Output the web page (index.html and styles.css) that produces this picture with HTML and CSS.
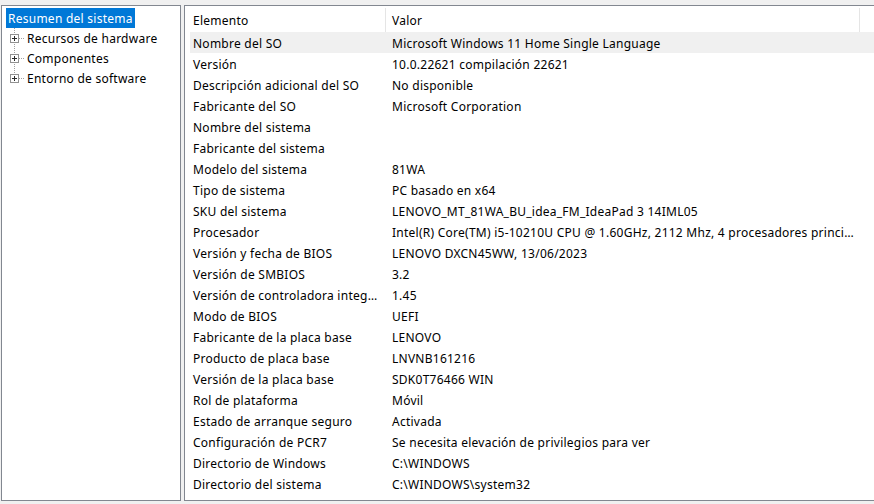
FILE: index.html
```html
<!DOCTYPE html>
<html lang="es">
<head>
<meta charset="utf-8">
<title>Información del sistema</title>
<link rel="stylesheet" href="styles.css">
</head>
<body>
<div class="app">
  <div class="tree-pane">
    <div class="tree">
      <div class="tree-item selected"><span class="label">Resumen del sistema</span></div>
      <div class="tree-item child">
        <svg class="twisty" width="20" height="20" viewBox="0 0 20 20"><path d="M8.5 0V20M13 10.5H19" stroke="#a0a0a0" stroke-dasharray="1 1" fill="none"/><rect x="4.5" y="6.5" width="8" height="8" fill="#fff" stroke="#919191"/><path d="M6 10.5H11M8.5 8V13" stroke="#2b2b2b" fill="none"/></svg>
        <span class="label">Recursos de hardware</span>
      </div>
      <div class="tree-item child">
        <svg class="twisty" width="20" height="20" viewBox="0 0 20 20"><path d="M8.5 0V20M13 10.5H19" stroke="#a0a0a0" stroke-dasharray="1 1" fill="none"/><rect x="4.5" y="6.5" width="8" height="8" fill="#fff" stroke="#919191"/><path d="M6 10.5H11M8.5 8V13" stroke="#2b2b2b" fill="none"/></svg>
        <span class="label">Componentes</span>
      </div>
      <div class="tree-item child">
        <svg class="twisty" width="20" height="20" viewBox="0 0 20 20"><path d="M8.5 0V6M13 10.5H19" stroke="#a0a0a0" stroke-dasharray="1 1" fill="none"/><rect x="4.5" y="6.5" width="8" height="8" fill="#fff" stroke="#919191"/><path d="M6 10.5H11M8.5 8V13" stroke="#2b2b2b" fill="none"/></svg>
        <span class="label">Entorno de software</span>
      </div>
    </div>
  </div>
  <div class="list-pane">
    <div class="list">
      <div class="row header">
        <div class="cell col1">Elemento</div>
        <div class="cell col2">Valor</div>
      </div>
      <div class="row hover"><div class="cell col1">Nombre del SO</div><div class="cell col2">Microsoft Windows 11 Home Single Language</div></div>
      <div class="row"><div class="cell col1">Versión</div><div class="cell col2">10.0.22621 compilación 22621</div></div>
      <div class="row"><div class="cell col1">Descripción adicional del SO</div><div class="cell col2">No disponible</div></div>
      <div class="row"><div class="cell col1">Fabricante del SO</div><div class="cell col2">Microsoft Corporation</div></div>
      <div class="row"><div class="cell col1">Nombre del sistema</div><div class="cell col2"></div></div>
      <div class="row"><div class="cell col1">Fabricante del sistema</div><div class="cell col2"></div></div>
      <div class="row"><div class="cell col1">Modelo del sistema</div><div class="cell col2">81WA</div></div>
      <div class="row"><div class="cell col1">Tipo de sistema</div><div class="cell col2">PC basado en x64</div></div>
      <div class="row"><div class="cell col1">SKU del sistema</div><div class="cell col2">LENOVO_MT_81WA_BU_idea_FM_IdeaPad 3 14IML05</div></div>
      <div class="row"><div class="cell col1">Procesador</div><div class="cell col2">Intel(R) Core(TM) i5-10210U CPU @ 1.60GHz, 2112 Mhz, 4 procesadores principales, 8 procesadores lógicos</div></div>
      <div class="row"><div class="cell col1">Versión y fecha de BIOS</div><div class="cell col2">LENOVO DXCN45WW, 13/06/2023</div></div>
      <div class="row"><div class="cell col1">Versión de SMBIOS</div><div class="cell col2">3.2</div></div>
      <div class="row"><div class="cell col1">Versión de controladora integrada</div><div class="cell col2">1.45</div></div>
      <div class="row"><div class="cell col1">Modo de BIOS</div><div class="cell col2">UEFI</div></div>
      <div class="row"><div class="cell col1">Fabricante de la placa base</div><div class="cell col2">LENOVO</div></div>
      <div class="row"><div class="cell col1">Producto de placa base</div><div class="cell col2">LNVNB161216</div></div>
      <div class="row"><div class="cell col1">Versión de la placa base</div><div class="cell col2">SDK0T76466 WIN</div></div>
      <div class="row"><div class="cell col1">Rol de plataforma</div><div class="cell col2">Móvil</div></div>
      <div class="row"><div class="cell col1">Estado de arranque seguro</div><div class="cell col2">Activada</div></div>
      <div class="row"><div class="cell col1">Configuración de PCR7</div><div class="cell col2">Se necesita elevación de privilegios para ver</div></div>
      <div class="row"><div class="cell col1">Directorio de Windows</div><div class="cell col2">C:\WINDOWS</div></div>
      <div class="row"><div class="cell col1">Directorio del sistema</div><div class="cell col2">C:\WINDOWS\system32</div></div>
      <div class="row"><div class="cell col1">Dispositivo de arranque</div><div class="cell col2">\Device\HarddiskVolume1</div></div>
    </div>
  </div>
</div>
</body>
</html>
```
FILE: styles.css
```css
html, body {
  margin: 0;
  padding: 0;
  background: #f0f0f0;
  font-family: "Noto Sans", "Liberation Sans", sans-serif;
  font-size: 12px;
  letter-spacing: 0.25px;
  color: #000;
  overflow: hidden;
}

.app {
  display: flex;
  gap: 3px;
  padding: 5px 0 0 1px;
  height: 496px;
  width: 1000px;
}

.tree-pane {
  width: 178px;
  height: 494px;
  background: #fff;
  border: 1px solid #828790;
  flex: none;
}

.tree {
  display: flex;
  flex-direction: column;
  padding: 2px 0 0 4px;
}

.tree-item {
  display: flex;
  align-items: center;
  height: 20px;
  white-space: nowrap;
}

.tree-item.selected {
  align-self: flex-start;
  background: #0078d7;
  color: #fff;
  padding: 0 2px;
}

.twisty {
  display: block;
  flex: none;
  margin-right: 1px;
}

.list-pane {
  flex: none;
  width: 800px;
  height: 494px;
  background: #fff;
  border: 1px solid #828790;
  border-right: none;
  overflow: hidden;
}

.list {
  padding: 1px 0 0 5px;
}

.row {
  display: grid;
  grid-template-columns: 195px 475px;
  height: 21px;
  align-items: center;
}

.row.header {
  height: 25px;
}

.row.hover {
  background: #f0f0f0;
}

.cell {
  white-space: nowrap;
  overflow: hidden;
  text-overflow: ellipsis;
  padding-left: 3px;
  padding-top: 2px;
}

.col1 {
  padding-right: 6px;
}

.col2 {
  padding-left: 7px;
  padding-right: 4px;
}

.header .cell {
  height: 100%;
  display: flex;
  align-items: center;
  box-sizing: border-box;
}

.header .col2 {
  border-left: 1px solid #e5e5e5;
  border-right: 1px solid #e5e5e5;
  padding-left: 6px;
  margin-top: 1px;
  height: 24px;
  padding-bottom: 1px;
}
```
